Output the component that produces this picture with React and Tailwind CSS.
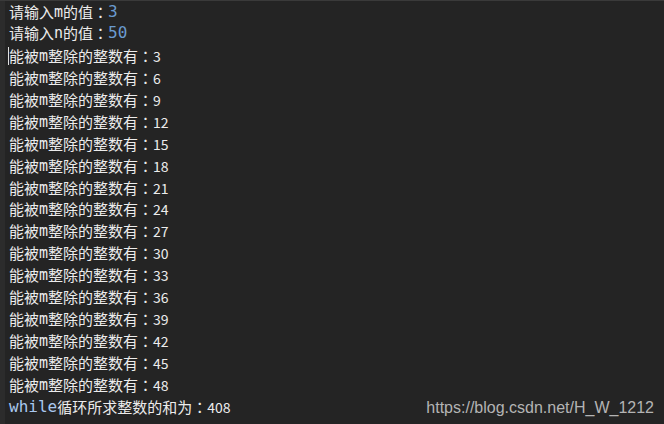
const nums = [3, 6, 9, 12, 15, 18, 21, 24, 27, 30, 33, 36, 39, 42, 45, 48];

function Colon() {
  return <span className="font-['Noto_Sans_CJK_JP',sans-serif]">：</span>;
}

function Mono({ children, className = '' }) {
  return <span className={`font-['DejaVu_Sans_Mono','Liberation_Mono',monospace] ${className}`}>{children}</span>;
}

export default function App() {
  return (
    <div className="w-[664px] h-[424px] bg-[#242424] flex overflow-hidden border-t border-[#3a3a3a] text-[15px] text-[#ececec] leading-[20px]">
      <div className="w-[5px] bg-[#2c2c2c] shrink-0" />
      <div className="relative flex-1 pl-1 pt-px flex flex-col font-['Noto_Sans_CJK_SC',sans-serif]">
        <div className="h-5 shrink-0 flex items-center whitespace-nowrap">
          请输入<Mono className="text-[15px]">m</Mono>的值<Colon /><Mono className="text-base text-[#6a9bd0]">3</Mono>
        </div>
        <div className="h-[22px] shrink-0 flex items-center whitespace-nowrap">
          请输入<Mono className="text-[15px]">n</Mono>的值<Colon /><Mono className="text-base text-[#6a9bd0]">50</Mono>
        </div>
        {nums.map((n, i) => (
          <div key={n} className={i === 0 ? 'relative h-[23px] shrink-0 flex items-center whitespace-nowrap' : 'relative h-[21.93px] shrink-0 flex items-center whitespace-nowrap'}>
            {i === 0 && <span className="absolute -left-px top-[3px] w-px h-[18px] bg-[#e0e0e0]" />}
            能被<Mono className="text-[15px]">m</Mono>整除的整数有<Colon /><span className="text-sm">{n}</span>
          </div>
        ))}
        <div className="h-[23px] shrink-0 flex items-center whitespace-nowrap">
          <Mono className="text-base text-[#a9c8ef]">while</Mono>循环所求整数的和为<Colon /><span className="text-sm">408</span>
        </div>
        <div className="absolute right-2.5 top-[397px] text-base leading-5 text-[#b4b4b4] font-['Liberation_Sans',Arial,sans-serif]">
          https://blog.csdn.net/H_W_1212
        </div>
      </div>
    </div>
  );
}
